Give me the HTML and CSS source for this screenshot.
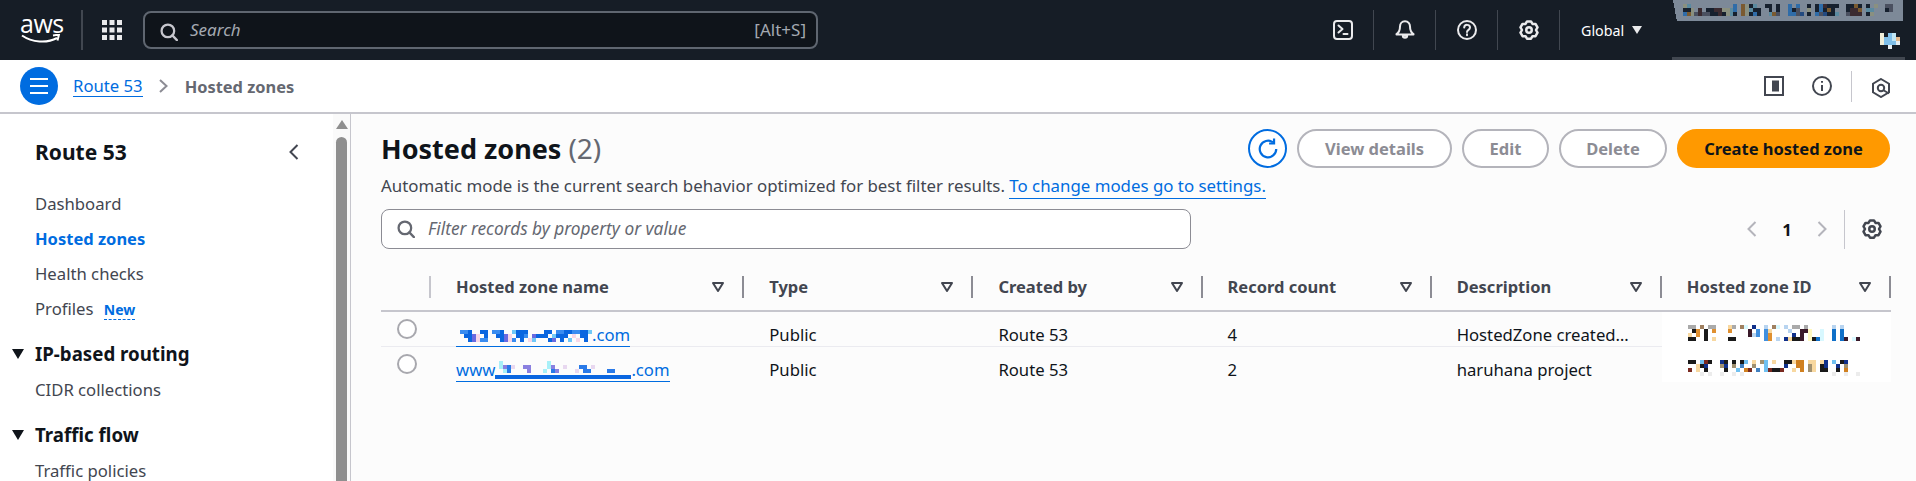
FILE: index.html
```html
<!DOCTYPE html>
<html lang="en">
<head>
    <meta charset="UTF-8">
    <title>Route 53 - Hosted zones</title>
    <link rel="stylesheet" href="styles.css">
</head>
<body>
    <svg class="icon-defs" aria-hidden="true">
        <symbol id="i-gear" viewBox="0 0 16 16">
            <path d="M6.4 1.1h3.2l1.2 2 2.4 0 1.6 2.8-1.2 2.1 1.2 2.1-1.6 2.8-2.4 0-1.2 2h-3.2l-1.2-2-2.4 0-1.6-2.8 1.2-2.1-1.2-2.1 1.6-2.8 2.4 0z"/>
            <circle cx="8" cy="8" r="2.2"/>
        </symbol>
        <symbol id="i-search" viewBox="0 0 16 16">
            <circle cx="7" cy="7" r="5.6"/>
            <path d="M11 11l4 4.2"/>
        </symbol>
        <symbol id="i-sort" viewBox="0 0 12 10">
            <path d="M1 1h10l-5 8z"/>
        </symbol>
    </svg>

    <header class="topbar">
        <div class="logo">
            <span class="logo-text">aws</span>
            <svg class="logo-smile" viewBox="0 0 40 10">
                <path d="M1 1.500c10 7 25 8 35 2.500"/>
                <path d="M32 1.500l6-1-1.500 6"/>
            </svg>
        </div>
        <div class="apps">
            <svg viewBox="0 0 20 20" width="20" height="20">
                <path d="M0 0h5v5h-5zM7.500 0h5v5h-5zM15 0h5v5h-5zM0 7.500h5v5h-5zM7.500 7.500h5v5h-5zM15 7.500h5v5h-5zM0 15h5v5h-5zM7.500 15h5v5h-5zM15 15h5v5h-5z"/>
            </svg>
        </div>
        <div class="global-search">
            <svg class="icon search-icon" width="18" height="18"><use href="#i-search"/></svg>
            <span class="global-search-text">Search</span>
            <span class="shortcut">[Alt+S]</span>
        </div>
        <div class="top-icons">
            <div class="top-icon">
                <svg class="icon" viewBox="0 0 20 20" width="20" height="20">
                    <rect x="1" y="1" width="18" height="18" rx="3"/>
                    <path d="M5.500 5.500l4 3.500-4 3.500M10.500 14h4"/>
                </svg>
            </div>
            <div class="top-icon">
                <svg class="icon" viewBox="0 0 20 20" width="20" height="20">
                    <path d="M10 1.200c-3.200 0-5 2.500-5 5.300 0 3.500-1 6-3.500 7.500v.5h17v-.5c-2.500-1.500-3.500-4-3.500-7.500 0-2.800-1.800-5.300-5-5.300z"/>
                    <path d="M7.800 15.500c0 3 4.400 3 4.400 0z"/>
                </svg>
            </div>
            <div class="top-icon">
                <svg class="icon" viewBox="0 0 20 20" width="20" height="20">
                    <circle cx="10" cy="10" r="9"/>
                    <path d="M7.200 7.500c.2-3.600 5.800-3.400 5.800 0 0 2.400-3 2.300-3 4.600"/>
                    <path d="M10 14.300v1"/>
                </svg>
            </div>
            <div class="top-icon">
                <svg class="icon" width="20" height="20"><use href="#i-gear"/></svg>
            </div>
        </div>
        <div class="region">Global<span class="region-caret"></span></div>
        <div class="account">
            <svg class="account-band" viewBox="0 0 59 5.250" width="236" height="21" preserveAspectRatio="none" shape-rendering="crispEdges">
                <path fill="#7d8998" d="M0 0h59v5.250h-58v0z"/>
                <g transform="translate(2.500 1)">
                    <path stroke="#16202e" d="M17 .5h1M21 .5h2M24 .5h1M32 .5h1M34 .5h1M37 .5h3M42 .5h2M45 .5h1M47 .5h1M0 1.500h2M6 1.500h2M18 1.500h2M22 1.500h1M24 1.500h1M28 1.500h1M34 1.500h1M36 1.500h1M38 1.500h1M42 1.500h1M52 1.500h1M7 2.500h2M10 2.500h1M13 2.500h1M17 2.500h1M19 2.500h1M32 2.500h1M37 2.500h2M47 2.500h1"/>
                    <path stroke="#2f6ca8" d="M13 .5h1M27 .5h1M29 .5h1M35 .5h1M13 1.500h1M27 1.500h1M35 1.500h1M0 2.500h1M18 2.500h1M27 2.500h2M34 2.500h1"/>
                    <path stroke="#7a5a30" d="M15 .5h1M44 .5h1M15 1.500h1M37 1.500h1M45 1.500h1M1 2.500h1M15 2.500h1M23 2.500h1"/>
                    <path stroke="#8a9080" d="M0 .5h1M16 .5h1M49 .5h1M2 1.500h1M10 1.500h2M16 1.500h1M32 1.500h1M2 2.500h1M11 2.500h1M16 2.500h1M48 2.500h1"/>
                    <path stroke="#5a8aa0" d="M1 .5h1M18 .5h1M12 1.500h1M17 1.500h1M47 1.500h2M12 2.500h1M22 2.500h1M39 2.500h1"/>
                    <path stroke="#4a5060" d="M52 .5h2M29 1.500h1M53 1.500h1M3 2.500h1M5 2.500h2M24 2.500h1M29 2.500h1M35 2.500h1M42 2.500h1"/>
                    <path stroke="#3a2a30" d="M36 .5h1M4 1.500h1M8 1.500h2M43 1.500h2M4 2.500h1M9 2.500h1M43 2.500h3"/>
                    <path stroke="#234a80" d="M30 2.500h1M36 2.500h1"/>
                </g>
            </svg>
            <svg class="account-id" viewBox="0 0 6 4" width="24" height="16" shape-rendering="crispEdges">
                <path stroke="#f0eed8" d="M0 .5h1M0 1.500h1M0 2.500h1"/>
                <path stroke="#80bfe8" d="M2 .5h1M1 1.500h2M1 2.500h3"/>
                <path stroke="#c0e6f5" d="M3 .5h1M3 1.500h1"/>
                <path stroke="#e4b88c" d="M4 1.500h1"/>
                <path stroke="#e8eef0" d="M4 2.500h1M2 3.500h1"/>
            </svg>
            <div class="account-edge"></div>
        </div>
    </header>

    <div class="subbar">
        <button class="menu-btn" type="button"><span></span><span></span><span></span></button>
        <a class="crumb-link" href="#">Route 53</a>
        <svg class="crumb-sep" viewBox="0 0 9 14" width="9" height="14"><path d="M1 1l6.500 6-6.500 6"/></svg>
        <span class="crumb-current">Hosted zones</span>
        <div class="subbar-tools">
            <svg class="tool-icon" viewBox="0 0 20 20" width="20" height="20">
                <rect x="1" y="1" width="18" height="18"/>
                <rect class="solid" x="8" y="4.500" width="7" height="11"/>
            </svg>
            <svg class="tool-icon info-icon" viewBox="0 0 20 20" width="20" height="20">
                <circle cx="10" cy="10" r="9"/>
                <path d="M10 9v6M10 5v1.800"/>
            </svg>
            <div class="tools-sep"></div>
            <svg class="tool-icon hex-icon" viewBox="0 0 20 20" width="20" height="20">
                <path d="M10 1l8 4.700v8.600l-8 4.700-8-4.700v-8.600z"/>
                <circle cx="10" cy="10" r="3.200"/>
                <path d="M12 12l6 3.500"/>
            </svg>
        </div>
    </div>

    <div class="page">
        <nav class="sidenav">
            <div class="nav-scroll">
                <div class="nav-head">
                    <h2>Route 53</h2>
                    <svg class="nav-close" viewBox="0 0 10 16" width="10" height="16"><path d="M8.500 1l-7 7 7 7"/></svg>
                </div>
                <a class="nav-link" href="#">Dashboard</a>
                <a class="nav-link active" href="#">Hosted zones</a>
                <a class="nav-link" href="#">Health checks</a>
                <a class="nav-link" href="#">Profiles <span class="new-badge">New</span></a>
                <div class="nav-section"><span class="section-caret"></span>IP-based routing</div>
                <a class="nav-link" href="#">CIDR collections</a>
                <div class="nav-section"><span class="section-caret"></span>Traffic flow</div>
                <a class="nav-link" href="#">Traffic policies</a>
            </div>
            <div class="scrollbar">
                <div class="scroll-arrow"></div>
                <div class="scroll-thumb"></div>
            </div>
        </nav>

        <main class="content">
            <div class="title-row">
                <h1>Hosted zones <span class="count">(2)</span></h1>
                <div class="actions">
                    <button class="refresh-btn" type="button">
                        <svg viewBox="0 0 20 20" width="22" height="22">
                            <path d="M17.500 10a7.500 7.500 0 1 1-3-6"/>
                            <path d="M15.500 .5v4.500h-4.500"/>
                        </svg>
                    </button>
                    <button class="btn btn-view" type="button" disabled>View details</button>
                    <button class="btn btn-edit" type="button" disabled>Edit</button>
                    <button class="btn btn-delete" type="button" disabled>Delete</button>
                    <button class="btn btn-primary" type="button">Create hosted zone</button>
                </div>
            </div>
            <p class="hint">Automatic mode is the current search behavior optimized for best filter results. <a href="#">To change modes go to settings.</a></p>

            <div class="filter-row">
                <div class="filter-box">
                    <svg class="icon" width="18" height="18"><use href="#i-search"/></svg>
                    <span>Filter records by property or value</span>
                </div>
                <div class="pagination">
                    <svg class="page-arrow" viewBox="0 0 10 16" width="10" height="16"><path d="M8.500 1l-7 7 7 7"/></svg>
                    <span class="page-num">1</span>
                    <svg class="page-arrow" viewBox="0 0 10 16" width="10" height="16"><path d="M1.500 1l7 7-7 7"/></svg>
                    <div class="page-sep"></div>
                    <svg class="icon page-gear" width="20" height="20"><use href="#i-gear"/></svg>
                </div>
            </div>

            <table class="zones">
                <colgroup>
                    <col class="col-radio"><col class="col-name"><col class="col-wide"><col class="col-wide"><col class="col-wide"><col class="col-desc"><col class="col-wide">
                </colgroup>
                <thead>
                    <tr>
                        <th><div class="th-inner first"></div></th>
                        <th><div class="th-inner">Hosted zone name<svg class="sort"><use href="#i-sort"/></svg></div></th>
                        <th><div class="th-inner">Type<svg class="sort"><use href="#i-sort"/></svg></div></th>
                        <th><div class="th-inner">Created by<svg class="sort"><use href="#i-sort"/></svg></div></th>
                        <th><div class="th-inner">Record count<svg class="sort"><use href="#i-sort"/></svg></div></th>
                        <th><div class="th-inner">Description<svg class="sort"><use href="#i-sort"/></svg></div></th>
                        <th><div class="th-inner">Hosted zone ID<svg class="sort"><use href="#i-sort"/></svg></div></th>
                    </tr>
                </thead>
                <tbody>
                    <tr>
                        <td class="radio-cell"><span class="radio"></span></td>
                        <td><a class="zone-link" href="#"><svg class="mosaic" viewBox="0 0 34 5" width="136" height="20" shape-rendering="crispEdges">
                            <path stroke="#3a8cf0" d="M1 1.500h2M9 1.500h2M25 1.500h2M6 3.500h2M14 3.500h1M29 1.500h2M17 2.500h1"/>
                            <path stroke="#0a66e0" d="M3 1.500h1M6 1.500h2M11 1.500h1M15 1.500h3M22 1.500h2M27 1.500h2M31 1.500h2M2 2.500h2M7 2.500h1M10 2.500h2M15 2.500h2M20 2.500h3M25 2.500h3M31 2.500h2M3 3.500h1M11 3.500h1M16 3.500h1M23 3.500h1M26 3.500h1M32 3.500h1"/>
                            <path stroke="#6a6ae0" d="M4 2.500h1M4 3.500h1M12 2.500h1M12 3.500h1M19 2.500h1M24 3.500h1"/>
                            <path stroke="#f8d8e8" d="M5 2.500h1M5 3.500h1M13 2.500h1M13 3.500h1M18 3.500h1M29 2.500h1M30 3.500h1"/>
                            <path stroke="#70c8f8" d="M14 1.500h1M19 3.500h1M24 2.500h1M28 3.500h1M33 1.500h1"/>
                        </svg>.com</a></td>
                        <td>Public</td>
                        <td>Route 53</td>
                        <td>4</td>
                        <td>HostedZone created…</td>
                        <td class="id-cell"><svg class="mosaic" viewBox="0 0 44 4" width="176" height="16" shape-rendering="crispEdges">
                            <path stroke="#aaaaaa" d="M0 .5h2M5 .5h2M11 .5h1M26 .5h2M29 .5h1"/>
                            <path stroke="#1a1a1a" d="M1 1.500h1M4 1.500h1M4 2.500h1M0 3.500h2M4 3.500h1M10 3.500h2M26 3.500h2M31 3.500h1"/>
                            <path stroke="#e09030" d="M2 1.500h1M6 1.500h1M10 1.500h1M2 2.500h1M20 2.500h1M20 3.500h1"/>
                            <path stroke="#f8d8a0" d="M10 .5h1M20 1.500h1M0 2.500h1M6 3.500h1M25 3.500h1"/>
                            <path stroke="#3a1a2a" d="M15 1.500h1M28 1.500h2M15 2.500h1M28 2.500h1M28 3.500h1M39 3.500h1M42 3.500h1"/>
                            <path stroke="#4090e0" d="M17 1.500h1M19 1.500h1M17 2.500h1M19 2.500h1M19 3.500h1"/>
                            <path stroke="#10308a" d="M16 .5h1M26 2.500h1M24 3.500h1"/>
                            <path stroke="#d8f8ff" d="M14 .5h1M22 .5h1M33 1.500h1M33 2.500h1M33 3.500h1M41 3.500h1"/>
                            <path stroke="#fff8c0" d="M30 1.500h1M30 2.500h1M30 3.500h1"/>
                            <path stroke="#1070c8" d="M36 1.500h1M38 1.500h1M36 2.500h1M38 2.500h1M32 3.500h1M36 3.500h1M38 3.500h1"/>
                            <path stroke="#b8d4f0" d="M19 .5h1M24 .5h1M36 .5h1M38 .5h1M25 1.500h1M16 2.500h1M22 3.500h1"/>
                            <path stroke="#a08060" d="M3 .5h1M13 .5h1M21 .5h1"/>
                        </svg></td>
                    </tr>
                    <tr>
                        <td class="radio-cell"><span class="radio"></span></td>
                        <td><a class="zone-link" href="#">www<svg class="mosaic" viewBox="0 0 34 5" width="136" height="20" shape-rendering="crispEdges">
                            <path stroke="#a8f0f8" d="M1 .5h1M1 1.500h1M13 .5h1M13 1.500h1M2 2.500h1M12 2.500h1"/>
                            <path stroke="#8a80e0" d="M2 1.500h1M7 1.500h2M8 2.500h1M14 1.500h1M15 2.500h1"/>
                            <path stroke="#2a7ae8" d="M3 1.500h1M3 2.500h1M14 2.500h1M21 1.500h2M22 2.500h2M28 2.500h2"/>
                            <path stroke="#e8d8f0" d="M4 1.500h1M17 1.500h1M24 1.500h1M20 2.500h1"/>
                            <path stroke="#0a66e0" d="M0 4h34" stroke-width="1.200"/>
                        </svg>.com</a></td>
                        <td>Public</td>
                        <td>Route 53</td>
                        <td>2</td>
                        <td>haruhana project</td>
                        <td class="id-cell"><svg class="mosaic" viewBox="0 0 44 4" width="176" height="16" shape-rendering="crispEdges">
                            <path stroke="#1a1a1a" d="M0 .5h2M5 .5h1M9 .5h1M11 .5h1M13 .5h1M24 .5h2M38 .5h1M3 1.500h1M33 1.500h1M4 2.500h1M9 2.500h1M21 2.500h2M33 2.500h2M37 2.500h1"/>
                            <path stroke="#70c0f0" d="M3 .5h1M14 .5h1M19 .5h1M36 .5h1M19 1.500h1M12 2.500h1M19 2.500h1"/>
                            <path stroke="#7a2a20" d="M4 .5h1M0 2.500h1M15 2.500h1M20 2.500h1M23 2.500h1"/>
                            <path stroke="#10308a" d="M8 .5h1M34 .5h1M39 .5h1M4 1.500h1M9 1.500h1M24 1.500h1M34 1.500h1M37 1.500h1"/>
                            <path stroke="#f8d8a0" d="M16 .5h1M21 .5h1M26 .5h1M30 .5h2M33 .5h1M2 1.500h1M31 1.500h1M2 2.500h1M26 2.500h1M31 2.500h1"/>
                            <path stroke="#d08020" d="M14 2.500h1M27 .5h1M27 1.500h1M28 .5h1M28 1.500h1M28 2.500h1M39 2.500h1"/>
                            <path stroke="#a09070" d="M18 .5h1M8 1.500h1M11 1.500h1M16 1.500h1M30 1.500h1M39 1.500h1M30 2.500h1"/>
                            <path stroke="#4080c0" d="M13 1.500h1M17 2.500h1"/>
                            <path stroke="#ececec" d="M3 3.500h1M5 3.500h1M8 3.500h1M11 3.500h1M13 3.500h1M36 3.500h1M39 3.500h1M42 3.500h1"/>
                        </svg></td>
                    </tr>
                </tbody>
            </table>
        </main>
    </div>
</body>
</html>
```

FILE: styles.css
```css
* {
    box-sizing: border-box;
}

body {
    margin: 0;
    height: 481px;
    overflow: hidden;
    font-family: "Noto Sans", Arial, sans-serif;
    font-size: 16.7px;
    color: #0f141a;
    background: #fff;
}

a {
    color: #006ce0;
    text-decoration: none;
}

.icon-defs {
    display: none;
}

.icon {
    fill: none;
    stroke: currentColor;
    stroke-width: 2;
    stroke-linecap: round;
    stroke-linejoin: round;
    flex: none;
}

/* Top bar */
.topbar {
    display: flex;
    align-items: center;
    height: 60px;
    background: #161d26;
    color: #eaeaec;
}

.logo {
    width: 83px;
    height: 40px;
    padding-left: 20px;
    position: relative;
    border-right: 2px solid #414750;
}

.logo-text {
    display: block;
    font-family: "Open Sans", sans-serif;
    font-size: 25px;
    line-height: 27px;
    color: #fff;
    letter-spacing: -.5px;
}

.logo-smile {
    position: absolute;
    left: 21px;
    top: 24px;
    width: 40px;
    height: 10px;
    fill: none;
    stroke: #fff;
    stroke-width: 2;
}

.apps {
    display: flex;
    margin-left: 19px;
    fill: #eaeaec;
}

.global-search {
    display: flex;
    align-items: center;
    width: 675px;
    height: 38px;
    margin-left: 21px;
    padding: 0 10px 0 15px;
    background: #0f141a;
    border: 2px solid #5f6670;
    border-radius: 8px;
    color: #a4a9b1;
}

.search-icon {
    margin-top: 3px;
    color: #c6c6cd;
}

.global-search-text {
    margin: 0 0 2px 12px;
    font-size: 17px;
    font-style: italic;
}

.shortcut {
    margin: 0 0 2px auto;
    font-size: 17px;
}

.top-icons {
    display: flex;
    margin-left: 494px;
}

.top-icon {
    display: flex;
    align-items: center;
    justify-content: center;
    width: 62px;
    height: 40px;
    border-right: 1px solid #414750;
}

.region {
    display: flex;
    align-items: center;
    margin-left: 21px;
    font-size: 14.3px;
    color: #fff;
}

.region-caret {
    width: 0;
    height: 0;
    margin-left: 8px;
    border-left: 5px solid transparent;
    border-right: 5px solid transparent;
    border-top: 8px solid #eaeaec;
}

.account {
    display: flex;
    flex-direction: column;
    align-items: flex-end;
    width: 236px;
    height: 60px;
    margin-left: 27px;
}

.account-band {
    margin-right: 2px;
    width: 230px;
    flex: none;
}

.account-id {
    margin: 12px 1px 0 0;
    flex: none;
}

.account-edge {
    width: 233px;
    height: 3px;
    margin: 8px 0 0 0;
    background: #414750;
}

/* Breadcrumb bar */
.subbar {
    display: flex;
    align-items: center;
    height: 54px;
    padding: 0 25px 0 20px;
    background: #fff;
    border-bottom: 2px solid #c6c6cd;
}

.menu-btn {
    display: flex;
    flex-direction: column;
    justify-content: center;
    gap: 5px;
    width: 38px;
    height: 38px;
    padding: 0 10px;
    background: #006ce0;
    border: none;
    border-radius: 50%;
}

.menu-btn span {
    height: 2px;
    background: #fff;
}

.crumb-link {
    margin-left: 15px;
    border-bottom: 1px solid #006ce0;
    line-height: 20px;
}

.crumb-sep {
    margin: 0 17px 0 16px;
    fill: none;
    stroke: #8c8c94;
    stroke-width: 2;
}

.crumb-current {
    font-size: 16.4px;
    font-weight: 700;
    color: #656871;
}

.subbar-tools {
    display: flex;
    align-items: center;
    margin-left: auto;
}

.tool-icon {
    fill: none;
    stroke: #424650;
    stroke-width: 2;
}

.tool-icon .solid {
    fill: #424650;
    stroke: none;
}

.info-icon {
    margin-left: 28px;
}

.tools-sep {
    width: 1px;
    height: 31px;
    margin-left: 19px;
    background: #c6c6cd;
}

.hex-icon {
    margin: 4px 0 0 19px;
}

/* Page */
.page {
    display: flex;
    height: 367px;
}

.sidenav {
    display: flex;
    flex: none;
    width: 351px;
    background: #fff;
    border-right: 1px solid #c6c6cd;
}

.nav-scroll {
    flex: 1;
    padding: 0 0 0 35px;
    white-space: nowrap;
}

.nav-head {
    display: flex;
    align-items: center;
    justify-content: space-between;
    height: 36px;
    margin: 20px 34px 16px 0;
}

.nav-head h2 {
    margin: 0;
    font-size: 21px;
    font-weight: 700;
    color: #0f141a;
}

.nav-close {
    fill: none;
    stroke: #424650;
    stroke-width: 2;
}

.nav-link {
    display: block;
    height: 35px;
    line-height: 35px;
    color: #424650;
}

.nav-link.active {
    font-size: 16.5px;
    font-weight: 700;
    color: #006ce0;
}

.new-badge {
    margin-left: 6px;
    font-size: 14px;
    font-weight: 700;
    color: #006ce0;
    border-bottom: 1px dashed #006ce0;
}

.nav-section {
    position: relative;
    height: 28px;
    margin-top: 14px;
    margin-bottom: 4px;
    line-height: 28px;
    font-size: 18.7px;
    font-weight: 700;
    color: #0f141a;
}

.section-caret {
    position: absolute;
    left: -23px;
    top: 9px;
    width: 0;
    height: 0;
    border-left: 6px solid transparent;
    border-right: 6px solid transparent;
    border-top: 10px solid #0f141a;
}

.scrollbar {
    display: flex;
    flex-direction: column;
    align-items: center;
    flex: none;
    width: 17px;
    padding-top: 6px;
    margin-right: 0;
    background: #fafafa;
}

.scroll-arrow {
    width: 0;
    height: 0;
    border-left: 6px solid transparent;
    border-right: 6px solid transparent;
    border-bottom: 9px solid #8f8f8f;
}

.scroll-thumb {
    flex: 1;
    width: 11px;
    margin-top: 8px;
    background: #8f8f8f;
    border-radius: 6px 6px 0 0;
}

/* Main content */
.content {
    flex: 1;
    min-width: 0;
    padding: 15px 26px 0 30px;
    background: #fcfcfc;
}

.title-row {
    display: flex;
    align-items: center;
    justify-content: space-between;
    height: 39px;
}

h1 {
    margin: 0;
    font-size: 27px;
    font-weight: 700;
    line-height: 39px;
}

.count {
    font-size: 28px;
    font-weight: 400;
    color: #656871;
}

.actions {
    display: flex;
    gap: 10px;
}

.refresh-btn {
    display: flex;
    align-items: center;
    justify-content: center;
    width: 39px;
    height: 39px;
    padding: 0;
    background: #fff;
    border: 2px solid #006ce0;
    border-radius: 50%;
}

.refresh-btn svg {
    fill: none;
    stroke: #006ce0;
    stroke-width: 2;
}

.btn {
    height: 39px;
    padding: 0;
    font-family: inherit;
    font-size: 16.5px;
    font-weight: 700;
    background: #fff;
    color: #8c8c94;
    border: 2px solid #b4b4bb;
    border-radius: 20px;
}

.btn-view {
    width: 155px;
}

.btn-edit {
    width: 87px;
}

.btn-delete {
    width: 108px;
}

.btn-primary {
    width: 213px;
    background: #ff9900;
    border-color: #ff9900;
    color: #0f141a;
}

.hint {
    margin: 6px 0 0;
    font-size: 16.85px;
    line-height: 24px;
    color: #424650;
}

.hint a {
    padding-bottom: 1px;
    border-bottom: 1px solid #006ce0;
}

.filter-row {
    display: flex;
    align-items: center;
    justify-content: space-between;
    margin-top: 11px;
}

.filter-box {
    display: flex;
    align-items: center;
    gap: 13px;
    width: 810px;
    height: 40px;
    padding: 0 15px;
    background: #fff;
    border: 1px solid #8c8c94;
    border-radius: 8px;
    color: #656871;
    font-size: 17.3px;
    font-style: italic;
}

.filter-box span {
    margin-bottom: 2px;
}

.pagination {
    display: flex;
    align-items: center;
    height: 39px;
    margin-right: 8px;
}

.page-arrow {
    fill: none;
    stroke: #b4b4bb;
    stroke-width: 2;
}

.page-num {
    width: 60px;
    text-align: center;
    font-weight: 700;
}

.page-sep {
    width: 1px;
    height: 39px;
    margin: 0 17px;
    background: #c6c6cd;
}

.page-gear {
    color: #424650;
}

/* Table */
.zones {
    width: 1510px;
    margin-top: 15px;
    border-collapse: collapse;
    table-layout: fixed;
}

.col-radio {
    width: 50px;
}

.col-name {
    width: 313px;
}

.col-wide {
    width: 229px;
}

.col-desc {
    width: 230px;
}

.zones th {
    height: 47px;
    padding: 0;
    border-bottom: 2px solid #c6c6cd;
    text-align: left;
}

.th-inner {
    display: flex;
    align-items: flex-start;
    justify-content: space-between;
    height: 22px;
    padding: 0 18px 0 25px;
    border-right: 2px solid #8c8c94;
    font-size: 16.5px;
    font-weight: 700;
    line-height: 21px;
    color: #424650;
}

.th-inner.first {
    border-right-color: #c6c6cd;
}

.sort {
    width: 12px;
    height: 10px;
    margin-top: 6px;
    fill: none;
    stroke: #424650;
    stroke-width: 2;
    stroke-linejoin: round;
}

.zones td {
    height: 35px;
    padding: 12px 0 0 25px;
    border-bottom: 1px solid #ebebf0;
    white-space: nowrap;
    line-height: 22px;
    vertical-align: top;
}

.zones tbody tr:last-child td {
    border-bottom: none;
}

.zones .radio-cell {
    padding: 0;
}

.radio {
    display: block;
    width: 20px;
    height: 20px;
    margin: 7px 0 0 16px;
    background: #fff;
    border: 2px solid #a8a8ae;
    border-radius: 50%;
}

.zone-link {
    display: inline-block;
    margin-bottom: -1px;
    border-bottom: 1px solid #006ce0;
    line-height: 22px;
}

.mosaic {
    display: inline-block;
    vertical-align: bottom;
}

.zones td.id-cell {
    padding: 7px 0 0 26px;
    background: #fff;
    border-bottom: none;
}
```
